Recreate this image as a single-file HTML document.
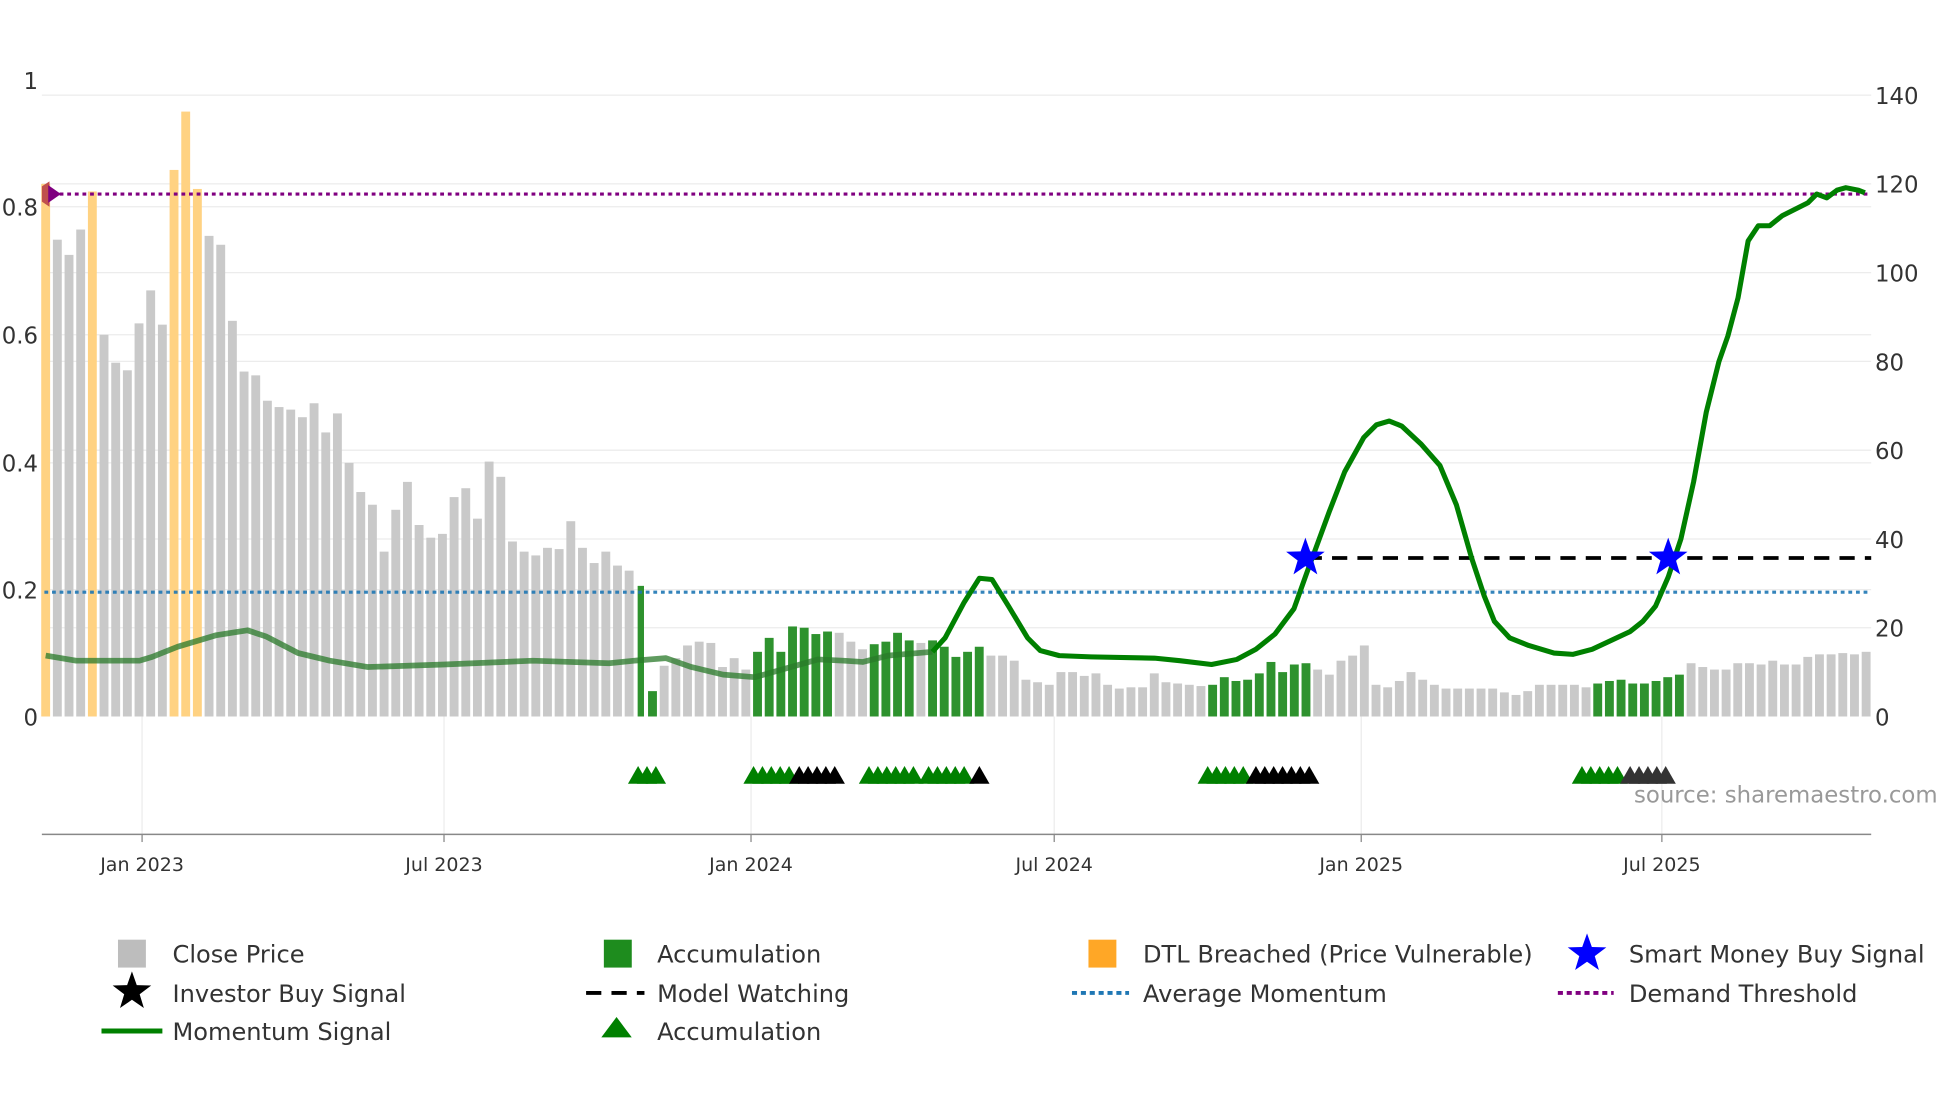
<!DOCTYPE html>
<html><head><meta charset="utf-8"><style>
html,body{margin:0;padding:0;background:#fff}
svg{display:block}
text{font-family:"DejaVu Sans","Liberation Sans",sans-serif}
</style></head><body>
<svg id="s" width="1960" height="1102" viewBox="0 0 1545 869" preserveAspectRatio="none" xmlns="http://www.w3.org/2000/svg">
<g stroke="#ececec" stroke-width="1">
<line x1="33" y1="75" x2="1475" y2="75"/><line x1="33" y1="145" x2="1475" y2="145"/><line x1="33" y1="215" x2="1475" y2="215"/><line x1="33" y1="285" x2="1475" y2="285"/><line x1="33" y1="355" x2="1475" y2="355"/><line x1="33" y1="425" x2="1475" y2="425"/><line x1="33" y1="495" x2="1475" y2="495"/>
<line x1="33" y1="163" x2="1475" y2="163"/><line x1="33" y1="264" x2="1475" y2="264"/><line x1="33" y1="365" x2="1475" y2="365"/><line x1="33" y1="465" x2="1475" y2="465"/>
<line x1="112" y1="565" x2="112" y2="658"/><line x1="350" y1="565" x2="350" y2="658"/><line x1="592" y1="565" x2="592" y2="658"/><line x1="831" y1="565" x2="831" y2="658"/><line x1="1073" y1="565" x2="1073" y2="658"/><line x1="1310" y1="565" x2="1310" y2="658"/>
</g>
<g id="bars"></g>
<line x1="35" y1="467" x2="1475" y2="467" stroke="#1f77b4" stroke-width="2.5" stroke-dasharray="3,3" opacity="0.9"/>
<line x1="35" y1="153" x2="1475" y2="153" stroke="#800080" stroke-width="2.5" stroke-dasharray="3,3"/>
<line x1="1030" y1="440" x2="1475" y2="440" stroke="#000" stroke-width="3" stroke-dasharray="12,8"/>
<polyline id="mom1" fill="none" stroke="#2a7a2a" stroke-width="4.5" opacity="0.75" stroke-linejoin="round"/>
<polyline id="mom2" fill="none" stroke="#008000" stroke-width="4" stroke-linejoin="round"/>
<path d="M33,147 L39,143 L39,163 L33,159Z" fill="#c0504d"/>
<path d="M38,146 L48,153 L38,160Z" fill="#800080"/>
<g id="tri"></g>
<path id="st1" fill="#0000ff"/>
<path id="st2" fill="#0000ff"/>
<line x1="33" y1="658" x2="1475" y2="658" stroke="#888" stroke-width="1.2"/>
<g stroke="#888"><line x1="112" y1="658" x2="112" y2="664"/><line x1="350" y1="658" x2="350" y2="664"/><line x1="592" y1="658" x2="592" y2="664"/><line x1="831" y1="658" x2="831" y2="664"/><line x1="1073" y1="658" x2="1073" y2="664"/><line x1="1310" y1="658" x2="1310" y2="664"/></g>
<g font-size="15" fill="#333" text-anchor="middle">
<text x="112" y="687">Jan 2023</text><text x="350" y="687">Jul 2023</text><text x="592" y="687">Jan 2024</text><text x="831" y="687">Jul 2024</text><text x="1073" y="687">Jan 2025</text><text x="1310" y="687">Jul 2025</text>
</g>
<g font-size="18" fill="#333" text-anchor="end">
<text x="30" y="70">1</text><text x="30" y="170">0.8</text><text x="30" y="271">0.6</text><text x="30" y="372">0.4</text><text x="30" y="472">0.2</text><text x="30" y="572">0</text>
</g>
<g font-size="18" fill="#333">
<text x="1478" y="82">140</text><text x="1478" y="152">120</text><text x="1478" y="222">100</text><text x="1478" y="292">80</text><text x="1478" y="362">60</text><text x="1478" y="432">40</text><text x="1478" y="502">20</text><text x="1478" y="572">0</text>
</g>
<text x="1288" y="633" font-size="18" fill="#999">source: sharemaestro.com</text>
<g font-size="19" fill="#333">
<rect x="93" y="741" width="22" height="22" fill="#bdbdbd"/><text x="136" y="759">Close Price</text>
<path id="lst" fill="#000"/><text x="136" y="790">Investor Buy Signal</text>
<line x1="80" y1="813" x2="128" y2="813" stroke="#008000" stroke-width="4"/><text x="136" y="820">Momentum Signal</text>
<rect x="476" y="741" width="22" height="22" fill="#1e8c1e"/><text x="518" y="759">Accumulation</text>
<line x1="462" y1="783" x2="508" y2="783" stroke="#000" stroke-width="3" stroke-dasharray="12,8"/><text x="518" y="790">Model Watching</text>
<path d="M474,818 L486,802 L498,818Z" fill="#008000"/><text x="518" y="820">Accumulation</text>
<rect x="858" y="741" width="22" height="22" fill="#ffa726"/><text x="901" y="759">DTL Breached (Price Vulnerable)</text>
<line x1="845" y1="783" x2="890" y2="783" stroke="#1f77b4" stroke-width="3" stroke-dasharray="4,3"/><text x="901" y="790">Average Momentum</text>
<path id="lst2" fill="#0000ff"/><text x="1284" y="759">Smart Money Buy Signal</text>
<line x1="1228" y1="783" x2="1272" y2="783" stroke="#800080" stroke-width="3" stroke-dasharray="4,3"/><text x="1284" y="790">Demand Threshold</text>
</g>
</svg>
<script>
var NS="http://www.w3.org/2000/svg";
function el(t,a,p){var e=document.createElementNS(NS,t);for(var k in a)e.setAttribute(k,a[k]);p.appendChild(e);return e;}
var tops=[145,189,201,181,151,264,286,292,255,229,256,134,88,149,186,193,253,293,296,316,321,323,329,318,341,326,365,388,398,435,402,380,414,424,421,392,385,409,364,376,427,435,438,432,433,411,432,444,435,446,450,462,545,525,519,509,506,507,526,519,528,514,503,514,494,495,500,498,499,506,512,508,506,499,505,507,505,510,518,514,510,517,517,521,536,538,540,530,530,533,531,540,543,542,542,531,538,539,540,541,540,534,537,536,531,522,530,524,523,528,532,521,517,509,540,542,537,530,536,540,543,543,543,543,543,546,548,545,540,540,540,540,542,539,537,536,539,539,537,534,532,523,526,528,528,523,523,524,521,524,524,518,516,516,515,516,514];
var orange=[0,4,11,12,13];
function isG(i){return i==51||i==52||(i>=61&&i<=67)||(i>=71&&i<=74)||(i>=76&&i<=80)||(i>=100&&i<=108)||(i>=133&&i<=140);}
var g=document.getElementById("bars"),n=tops.length,step=(1471-36)/(n-1);
for(var i=0;i<n;i++){var x=36+i*step,c="#c9c9c9",w=7;
if(orange.indexOf(i)>=0)c="#ffd282";else if(isG(i)){c="#2e922e";}
if(i==51)w=5;
el("rect",{x:x-w/2,y:tops[i],width:w,height:565-tops[i],fill:c},g);}
var pts=[[36,517],[60,521],[110,521],[120,518],[140,510],[170,501],[195,497],[210,502],[235,515],[260,521],[290,526],[350,524],[420,521],[480,523],[500,521],[525,519],[545,526],[570,532],[595,534],[620,527],[645,520],[665,521],[680,522],[700,517],[735,514],[745,503],[760,475],[772,456],[782,457],[795,478],[810,503],[820,513],[835,517],[860,518],[910,519],[930,521],[955,524],[975,520],[990,512],[1005,500],[1020,480],[1030,452],[1048,403],[1060,372],[1075,345],[1085,335],[1095,332],[1105,336],[1120,350],[1135,367],[1148,398],[1160,440],[1170,470],[1178,490],[1190,503],[1205,509],[1225,515],[1240,516],[1255,512],[1270,505],[1285,498],[1295,490],[1305,478],[1315,455],[1325,425],[1335,380],[1345,325],[1355,285],[1362,265],[1370,235],[1378,190],[1386,178],[1395,178],[1405,170],[1415,165],[1425,160],[1432,153],[1440,156],[1448,150],[1455,148],[1465,150],[1470,152]];
var a=[],b=[];pts.forEach(function(p){if(p[0]<=735)a.push(p.join(","));if(p[0]>=735)b.push(p.join(","));});
document.getElementById("mom1").setAttribute("points",a.join(" "));
document.getElementById("mom2").setAttribute("points",b.join(" "));
var t=document.getElementById("tri");
function tri(x,c){el("path",{d:"M"+(x-8)+",618 L"+x+",604 L"+(x+8)+",618Z",fill:c},t);}
function run(x0,x1,c){for(var x=x0;x<=x1;x+=7)tri(x,c);}
run(503,517,"#008000");run(594,624,"#008000");run(630,658,"#000");
run(685,720,"#008000");run(732,763,"#008000");tri(772,"#000");
run(952,982,"#008000");run(990,1034,"#000");
run(1247,1277,"#008000");run(1285,1319,"#333");
function star(cx,cy,R){var r=R*0.4,d="";for(var k=0;k<10;k++){var ang=-Math.PI/2+k*Math.PI/5,rr=k%2?r:R;d+=(k?"L":"M")+(cx+rr*Math.cos(ang)).toFixed(1)+","+(cy+rr*Math.sin(ang)).toFixed(1);}return d+"Z";}
document.getElementById("st1").setAttribute("d",star(1029,440,16));
document.getElementById("st2").setAttribute("d",star(1315,440,16));
document.getElementById("lst").setAttribute("d",star(104,782,16));
document.getElementById("lst2").setAttribute("d",star(1251,752,16));
</script>
</body></html>
